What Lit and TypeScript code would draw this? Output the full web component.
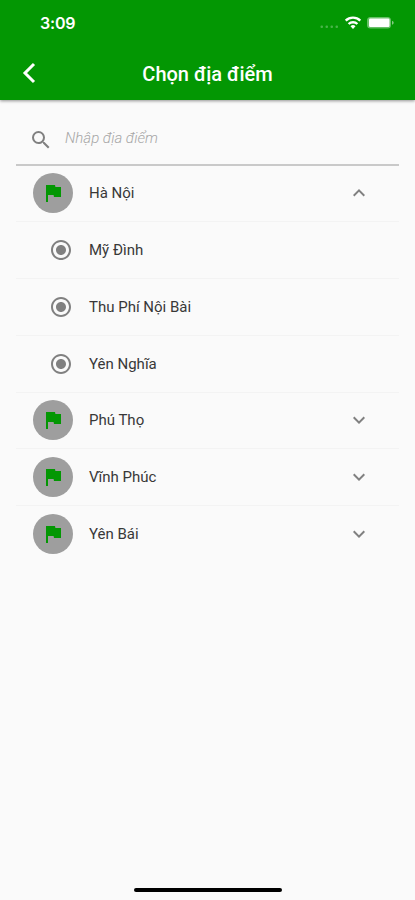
import { LitElement, html, css, svg } from "lit";
import { customElement } from "lit/decorators.js";

interface Place {
  name: string;
  stops?: string[];
}

const PLACES: Place[] = [
  { name: "Hà Nội", stops: ["Mỹ Đình", "Thu Phí Nội Bài", "Yên Nghĩa"] },
  { name: "Phú Thọ" },
  { name: "Vĩnh Phúc" },
  { name: "Yên Bái" },
];

const ICONS = {
  search:
    "M15.5 14h-.79l-.28-.27A6.471 6.471 0 0 0 16 9.500 6.500 6.500 0 1 0 9.500 16c1.610 0 3.090-.59 4.230-1.570l.27.280v.790l5 4.990L20.490 19l-4.990-5zm-6 0C7.010 14 5 11.990 5 9.500S7.010 5 9.500 5 14 7.010 14 9.500 11.990 14 9.500 14z",
  flag: "M14.400 6L14 4H5v17h2v-7h5.600l.4 2h7V6z",
  radio:
    "M12 7c-2.760 0-5 2.240-5 5s2.240 5 5 5 5-2.240 5-5-2.240-5-5-5zm0-5C6.480 2 2 6.480 2 12s4.480 10 10 10 10-4.480 10-10S17.520 2 12 2zm0 18c-4.420 0-8-3.580-8-8s3.580-8 8-8 8 3.580 8 8-3.580 8-8 8z",
  up: "M12 8l-6 6 1.410 1.410L12 10.830l4.590 4.580L18 14z",
  down: "M16.590 8.590L12 13.170 7.410 8.590 6 10l6 6 6-6z",
};

const icon = (name: keyof typeof ICONS) =>
  html`<svg class="icon ${name}" viewBox="0 0 24 24">${svg`<path d=${ICONS[name]} />`}</svg>`;

@customElement("app-root")
export class AppRoot extends LitElement {
  static styles = css`
    :host {
      display: flex;
      flex-direction: column;
      height: 900px;
      background: #fafafa;
      font-family: Roboto, sans-serif;
      color: #383838;
      overflow: hidden;
    }
    header {
      height: 100px;
      flex: none;
      background: #039703;
      color: #fff;
      box-shadow: 0 1px 3px rgba(0, 0, 0, 0.42);
    }
    .status {
      height: 46px;
      box-sizing: border-box;
      padding: 0 21px 0 40px;
      display: flex;
      align-items: center;
    }
    .time {
      flex: 1;
      font: 600 16px/20px Inter, sans-serif;
      letter-spacing: -0.2px;
    }
    .signals {
      display: block;
      width: 76px;
      height: 20px;
    }
    .bar {
      height: 54px;
      display: grid;
      grid-template-columns: 58px 1fr 58px;
      align-items: center;
    }
    .back {
      width: 14px;
      height: 22px;
      margin-left: 22px;
    }
    h1 {
      margin: 1px 0 0;
      text-align: center;
      font-size: 20px;
      line-height: 24px;
      font-weight: 500;
    }
    .icon {
      display: block;
      width: 24px;
      height: 24px;
      fill: #808080;
      flex: none;
    }
    main {
      flex: 1;
      padding: 14px 16px 0;
    }
    .field {
      height: 51.5px;
      box-sizing: border-box;
      border-bottom: 2px solid #c9c9c9;
      padding: 3px 12.500px 0;
      display: flex;
      align-items: center;
      gap: 12.500px;
    }
    .hint {
      font-size: 15px;
      font-weight: 300;
      font-style: italic;
      color: #a6a6a6;
      line-height: 20px;
      margin-top: -4px;
    }
    .row {
      height: 56.75px;
      box-sizing: border-box;
      border-bottom: 1px solid #f3f3f3;
      padding: 0 28px 0 16.500px;
      display: grid;
      grid-template-columns: 56.500px 1fr 24px;
      align-items: center;
      font-size: 15px;
      line-height: 20px;
    }
    .row:last-child {
      border-color: transparent;
    }
    .avatar {
      width: 40px;
      height: 40px;
      border-radius: 50%;
      background: #9e9e9e;
      display: grid;
      place-items: center;
    }
    .flag {
      fill: #039703;
    }
    .radio {
      margin-left: 16px;
    }
    .home {
      width: 148px;
      height: 4.500px;
      border-radius: 3px;
      background: #000;
      margin: 0 auto 8px;
    }
  `;

  private placeRow(place: Place) {
    return html`
      <div class="row">
        <span class="avatar">${icon("flag")}</span>
        <span>${place.name}</span>
        ${icon(place.stops ? "up" : "down")}
      </div>
      ${place.stops?.map(
        (stop) => html`<div class="row">${icon("radio")}<span>${stop}</span></div>`
      )}
    `;
  }

  render() {
    return html`
      <header>
        <div class="status">
          <span class="time">3:09</span>
          <svg class="signals" viewBox="0 0 76 20" fill="#fff">
            <g opacity="0.28">
              <rect x="2.500" y="12.500" width="2.500" height="2.500" rx="1" />
              <rect x="7.500" y="12.500" width="2.500" height="2.500" rx="1" />
              <rect x="12.500" y="12.500" width="2.500" height="2.500" rx="1" />
              <rect x="17.500" y="12.500" width="2.500" height="2.500" rx="1" />
            </g>
            <g fill="none" stroke="#fff" stroke-width="2.400">
              <path d="M27.700 7.600a10.500 10.500 0 0 1 14.600 0" />
              <path d="M30.600 11a6.300 6.300 0 0 1 8.800 0" />
            </g>
            <path d="M35 15.900l-2.500-2.600a3.600 3.600 0 0 1 5 0z" />
            <rect x="49" y="4" width="24" height="11.500" rx="3.500" opacity="0.4" />
            <rect x="51" y="5.500" width="20.500" height="8.500" rx="1.200" />
            <path d="M74 7.700q1.700 .6 1.700 2t-1.700 2z" opacity="0.5" />
          </svg>
        </div>
        <div class="bar">
          <svg class="back" viewBox="0 0 14 22" fill="none" stroke="#fff" stroke-width="3">
            <path d="M12 2L3 11l9 9" />
          </svg>
          <h1>Chọn địa điểm</h1>
        </div>
      </header>
      <main>
        <div class="field">${icon("search")}<span class="hint">Nhập địa điểm</span></div>
        ${PLACES.map((p) => this.placeRow(p))}
      </main>
      <div class="home"></div>
    `;
  }
}
